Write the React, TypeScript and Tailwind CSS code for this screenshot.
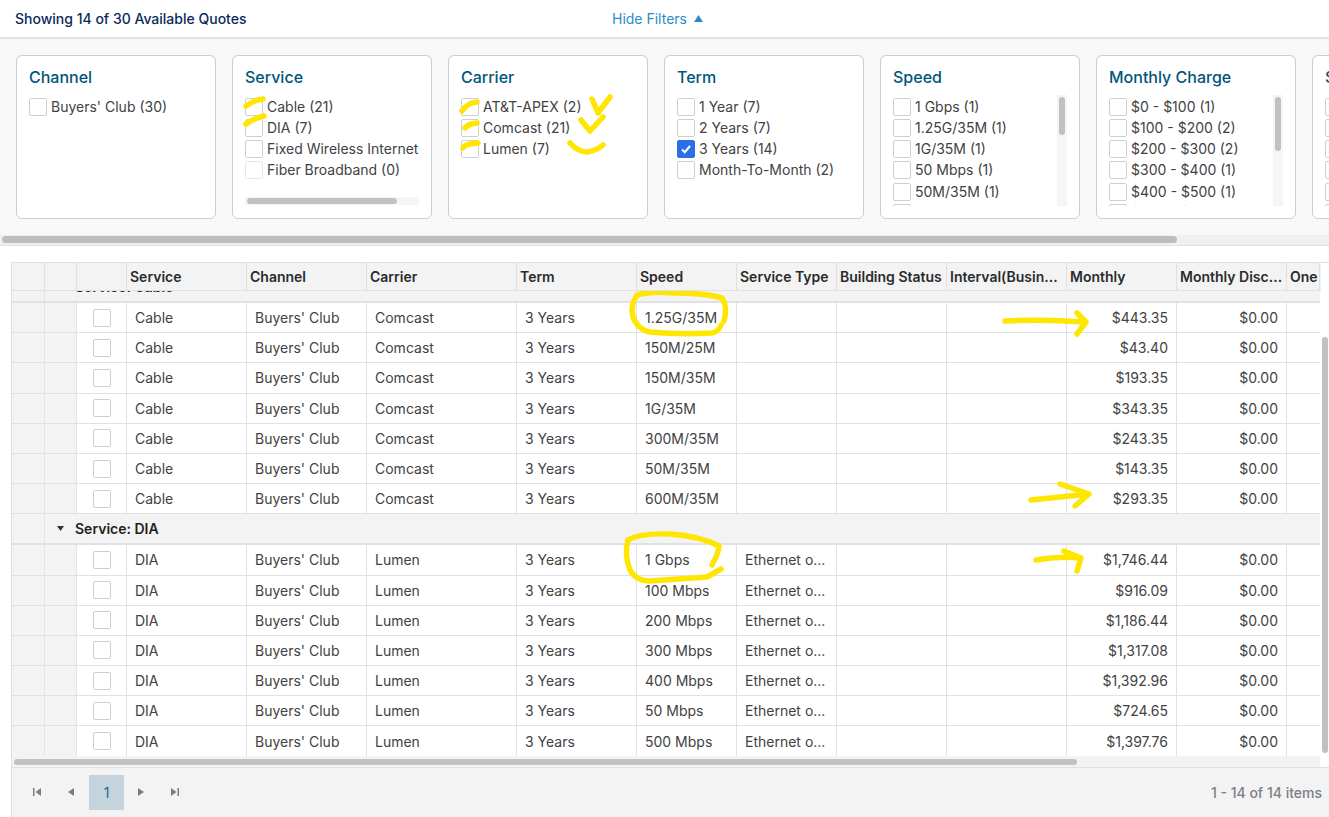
const COLS = "grid grid-cols-[33px_32px_50px_120px_120px_150px_120px_100px_100px_110px_120px_110px_110px_33px]";

interface FilterItem {
  label: string;
  checked?: boolean;
  faint?: boolean;
}

interface FilterCardProps {
  title: string;
  items: FilterItem[];
  scroll?: "x" | "y";
  thumb?: string;
}

const channel: FilterItem[] = [{ label: "Buyers' Club (30)" }];
const service: FilterItem[] = [{ label: "Cable (21)" }, { label: "DIA (7)" }, { label: "Fixed Wireless Internet (0)" }, { label: "Fiber Broadband (0)", faint: true }];
const carrier: FilterItem[] = [{ label: "AT&T-APEX (2)" }, { label: "Comcast (21)" }, { label: "Lumen (7)" }];
const term: FilterItem[] = [{ label: "1 Year (7)" }, { label: "2 Years (7)" }, { label: "3 Years (14)", checked: true }, { label: "Month-To-Month (2)" }];
const speed: FilterItem[] = [{ label: "1 Gbps (1)" }, { label: "1.25G/35M (1)" }, { label: "1G/35M (1)" }, { label: "50 Mbps (1)" }, { label: "50M/35M (1)" }, { label: "100 Mbps (1)" }];
const monthly: FilterItem[] = [{ label: "$0 - $100 (1)" }, { label: "$100 - $200 (2)" }, { label: "$200 - $300 (2)" }, { label: "$300 - $400 (1)" }, { label: "$400 - $500 (1)" }, { label: "$500 - $600 (1)" }];

const headers = ["", "", "", "Service", "Channel", "Carrier", "Term", "Speed", "Service Type", "Building Status", "Interval(Busin...", "Monthly", "Monthly Disc...", "One"];

const cableRows = [
  ["1.25G/35M", "$443.35"],
  ["150M/25M", "$43.40"],
  ["150M/35M", "$193.35"],
  ["1G/35M", "$343.35"],
  ["300M/35M", "$243.35"],
  ["50M/35M", "$143.35"],
  ["600M/35M", "$293.35"],
];

const diaRows = [
  ["1 Gbps", "$1,746.44"],
  ["100 Mbps", "$916.09"],
  ["200 Mbps", "$1,186.44"],
  ["300 Mbps", "$1,317.08"],
  ["400 Mbps", "$1,392.96"],
  ["50 Mbps", "$724.65"],
  ["500 Mbps", "$1,397.76"],
];

const Checkbox = ({ checked, faint }: { checked?: boolean; faint?: boolean }) => (
  <span className={`flex h-[18px] w-[18px] shrink-0 items-center justify-center rounded-[2px] border ${checked ? "border-[#2b6fe8] bg-[#2b6fe8]" : faint ? "border-[#e6e6e6] bg-white" : "border-[#cfcfcf] bg-white"}`}>
    {checked && (
      <svg width="12" height="12" viewBox="0 0 12 12" fill="none">
        <path d="M2 6.5 L4.8 9.2 L10 3" stroke="white" strokeWidth="2" />
      </svg>
    )}
  </span>
);

const FilterCard = ({ title, items, scroll, thumb }: FilterCardProps) => (
  <div className="flex h-[164px] w-[200px] shrink-0 flex-col rounded-md border border-[#cccccc] bg-white pl-[12px] pt-[11px]">
    <div className="h-[24px] text-[16px] leading-[20px] font-medium text-[#00567a]">{title}</div>
    <div className="mt-[4px] flex h-[111px] w-[174px]">
      <div className="min-w-0 flex-1 overflow-hidden pt-[1px]">
        <div className={scroll === "x" ? "h-[92px]" : "h-[110px]"}>
          {items.map((item) => (
            <div key={item.label} className="flex h-[21.25px] items-center gap-[4px] whitespace-nowrap text-[14px] text-[#424242]">
              <Checkbox checked={item.checked} faint={item.faint} />
              <span className="mb-[1px]">{item.label}</span>
            </div>
          ))}
        </div>
        {scroll === "x" && (
          <div className="mt-[9px] h-[8px] w-full bg-[#f5f5f5]">
            <div className="ml-[2px] h-[6px] w-[150px] translate-y-[1px] rounded-full bg-[#c1c1c1]"></div>
          </div>
        )}
      </div>
      {scroll === "y" && (
        <div className="h-[111px] w-[10px] bg-[#f5f5f5] pl-[2px] pt-[2px]">
          <div className={`w-[6px] rounded-full bg-[#c1c1c1] ${thumb}`}></div>
        </div>
      )}
    </div>
  </div>
);

const DataRow = ({ service, speed, monthly, type }: { service: string; speed: string; monthly: string; type: string }) => {
  const carrierName = service === "Cable" ? "Comcast" : "Lumen";
  return (
    <div className={`${COLS} h-[30.2px] border-b border-[#dfe1e6] text-[14px] text-[#424242]`}>
      <div className="border-r border-[#e3e3e3] bg-[#f3f3f3]"></div>
      <div className="border-r border-[#e3e3e3] bg-[#f3f3f3]"></div>
      <div className="flex items-center justify-center border-r border-[#dfe1e6] bg-white"><Checkbox /></div>
      <div className="flex items-center border-r border-[#dfe1e6] bg-white pl-[8px]">{service}</div>
      <div className="flex items-center border-r border-[#dfe1e6] bg-white pl-[8px]">Buyers' Club</div>
      <div className="flex items-center border-r border-[#dfe1e6] bg-white pl-[8px]">{carrierName}</div>
      <div className="flex items-center border-r border-[#dfe1e6] bg-white pl-[8px]">3 Years</div>
      <div className="flex items-center border-r border-[#dfe1e6] bg-white pl-[8px]">{speed}</div>
      <div className="flex items-center border-r border-[#dfe1e6] bg-white pl-[8px]">{type}</div>
      <div className="border-r border-[#dfe1e6] bg-white"></div>
      <div className="border-r border-[#dfe1e6] bg-white"></div>
      <div className="flex items-center justify-end border-r border-[#dfe1e6] bg-white pr-[8px]">{monthly}</div>
      <div className="flex items-center justify-end border-r border-[#dfe1e6] bg-white pr-[8px]">$0.00</div>
      <div className="bg-white"></div>
    </div>
  );
};

const GroupRow = ({ label, caret }: { label: string; caret?: boolean }) => (
  <div className="flex h-[31px] border-b-2 border-[#dfe1e6] bg-[#f3f3f3]">
    <div className="w-[33px] border-r border-[#e3e3e3]"></div>
    <div className="flex items-center pl-[12px] text-[14px] font-semibold text-[#1f1f1f]">
      {caret && (
        <svg width="7" height="5" viewBox="0 0 7 5" className="mr-[11px]">
          <path d="M0 0 H7 L3.5 5 Z" fill="#333333" />
        </svg>
      )}
      <span className={caret ? "" : "ml-[18px]"}>{label}</span>
    </div>
  </div>
);

const PagerIcon = ({ d }: { d: string }) => (
  <svg width="10" height="10" viewBox="0 0 10 10">
    <path d={d} fill="#7d7d7d" />
  </svg>
);

// yellow marker scribbles on top of the screenshot
const Scribbles = () => (
  <svg className="pointer-events-none absolute left-0 top-0" width="1329" height="817" fill="none" stroke="#ffe600" strokeWidth="5.5" strokeLinecap="round" strokeLinejoin="round">
    <path d="M246 106 Q254 100 263 99" />
    <path d="M246 124 Q254 118 264 116" />
    <path d="M462 111 Q467 103 477 102" />
    <path d="M465 128 Q468 124 477 123" />
    <path d="M463 148 Q464 144 478 143" />
    <path d="M592 99 L598 113 L610 97" />
    <path d="M581 120 L590 131 L603 117" />
    <path d="M570 143 Q578 152 587 152 Q596 151 603 145" />
    <path d="M724 321 Q728 306 722 298 Q705 293 674 293 Q650 291 637 295 Q630 305 633 317 Q638 330 650 332 Q680 335 712 333 Q718 332 721 325" />
    <path d="M1005 321 Q1045 319 1085 322 M1077 313 L1086 322 L1077 334" />
    <path d="M1031 500 Q1060 497 1089 494 M1060 484 L1089 494 L1075 506" />
    <path d="M1036 560 Q1058 556 1080 558 M1064 551 L1081 558 L1077 571" />
    <path d="M712 565 Q719 552 719 546 Q700 536 670 534 Q640 533 628 540 Q624 555 630 570 Q636 581 650 581 Q680 579 707 577 L721 569" />
  </svg>
);

export default function App() {
  return (
    <div className="relative flex h-[817px] w-[1329px] flex-col overflow-hidden bg-white font-['Inter',sans-serif]">
      {/* top bar */}
      <div className="relative flex h-[39px] shrink-0 items-center justify-center border-b-2 border-[#e2e2e2] bg-white">
        <div className="absolute left-[15px] top-[11px] text-[14px] leading-[16px] font-medium text-[#0b2a5b]">Showing 14 of 30 Available Quotes</div>
        <div className="flex items-center gap-[7px] pr-[14px] text-[14px] text-[#2a8cc7]">
          Hide Filters
          <svg width="9" height="7" viewBox="0 0 9 7"><path d="M0 7 L4.5 0 L9 7 Z" fill="#2a8cc7" /></svg>
        </div>
      </div>

      {/* filters */}
      <div className="h-[196px] shrink-0 overflow-hidden bg-[#f8f8f8] pl-[16px] pt-[16px]">
        <div className="flex gap-[16px]">
          <FilterCard title="Channel" items={channel} />
          <FilterCard title="Service" items={service} scroll="x" />
          <FilterCard title="Carrier" items={carrier} />
          <FilterCard title="Term" items={term} />
          <FilterCard title="Speed" items={speed} scroll="y" thumb="h-[38px]" />
          <FilterCard title="Monthly Charge" items={monthly} scroll="y" thumb="h-[54px]" />
          <FilterCard title="Speed" items={speed} />
        </div>
      </div>
      <div className="h-[11px] shrink-0 border-b border-[#e2e2e2] bg-[#f0f0f0] pl-[2px] pt-[1px]">
        <div className="h-[7px] w-[1175px] rounded-full bg-[#bdbdbd]"></div>
      </div>

      {/* grid */}
      <div className="ml-[11px] mt-[16px] flex min-h-0 flex-1 flex-col border-l border-t border-[#e0e0e0]">
        <div className={`${COLS} relative z-10 h-[28px] w-[1309px] shrink-0 border-b border-[#dfe1e6] bg-[#f3f3f3] text-[14px] font-semibold text-[#2b2b2b]`}>
          {headers.map((h, i) => (
            <div key={i} className="flex items-center overflow-hidden whitespace-nowrap border-r border-[#e0e0e0] pl-[3px]">{h}</div>
          ))}
        </div>
        <div className="flex h-[465px] shrink-0">
          <div className="w-[1308px] shrink-0 overflow-hidden">
            <div className="-mt-[19px]">
              <GroupRow label="Service: Cable" />
              {cableRows.map((r) => (
                <DataRow key={r[0]} service="Cable" speed={r[0]} monthly={r[1]} type="" />
              ))}
              <GroupRow label="Service: DIA" caret />
              {diaRows.map((r) => (
                <DataRow key={r[0]} service="DIA" speed={r[0]} monthly={r[1]} type="Ethernet o..." />
              ))}
            </div>
          </div>
          <div className="flex-1 bg-white pl-[2px]">
            <div className="mt-[46px] h-[416px] w-[6px] rounded-full bg-[#c1c1c1]"></div>
          </div>
        </div>
        <div className="flex h-[11px] w-[1308px] shrink-0 items-center bg-[#f3f3f3] pl-[2px]">
          <div className="h-[6px] w-[1063px] rounded-full bg-[#c1c1c1]"></div>
        </div>
        <div className="flex flex-1 items-center justify-between border-t border-[#e0e0e0] bg-[#f3f3f3] pb-[1px] pl-[20px] pr-[7px]">
          <div className="flex items-center">
            <div className="flex w-[34px] justify-start"><PagerIcon d="M1 1 H2.5 V9 H1 Z M9 1 V9 L3.5 5 Z" /></div>
            <div className="flex w-[23px] justify-start"><PagerIcon d="M8 1 V9 L2 5 Z" /></div>
            <div className="flex h-[35px] w-[35px] items-center justify-center bg-[#c5d3dc] text-[14px] text-[#1c6a9c]">1</div>
            <div className="ml-[12px] flex w-[34px] justify-start"><PagerIcon d="M2 1 V9 L8 5 Z" /></div>
            <div className="flex w-[24px] justify-start"><PagerIcon d="M7.5 1 H9 V9 H7.5 Z M1 1 V9 L6.5 5 Z" /></div>
          </div>
          <div className="text-[14px] font-medium text-[#7b7f87]">1 - 14 of 14 items</div>
        </div>
      </div>

      <Scribbles />
    </div>
  );
}
